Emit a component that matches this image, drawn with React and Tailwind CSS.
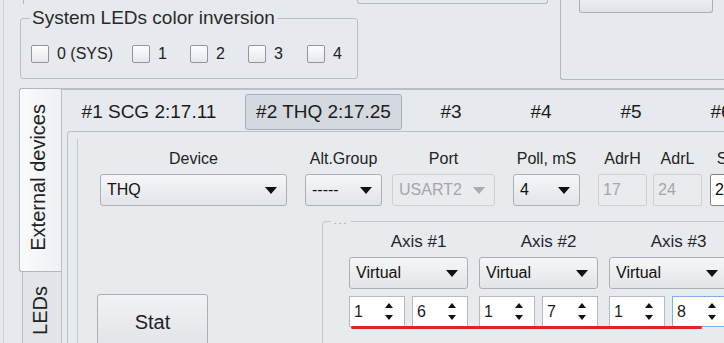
import React from "react";

// small down arrow used by every combo
const Arrow = ({ disabled }) => (
  <svg width="12" height="7" viewBox="0 0 12 7" className="shrink-0">
    <path d="M0 0H12L6 7Z" fill={disabled ? "#a9adb2" : "#111"} />
  </svg>
);

function Combo({ value, className = "", disabled = false }) {
  return (
    <div
      className={`flex items-center h-[32px] pl-[6px] pr-[9px] rounded-[3px] border ${
        disabled
          ? "border-[#cdd1d6] bg-[#e9ebee] text-[#a3a7ac]"
          : "border-[#aab0b7] bg-linear-to-b from-[#f5f6f7] to-[#e2e5e8] text-[#111]"
      } ${className}`}
    >
      <span className="flex-1 text-[16px] leading-none">{value}</span>
      <Arrow disabled={disabled} />
    </div>
  );
}

function Field({ value, disabled = false }) {
  return (
    <div
      className={`mt-[5px] w-full h-[32px] flex items-center pl-[4px] text-[16px] rounded-[2px] border ${
        disabled
          ? "border-[#cdd1d6] bg-[#e9ebee] text-[#a3a7ac]"
          : "border-[#7d838a] bg-white text-[#111]"
      }`}
    >
      {value}
    </div>
  );
}

function Spin({ value, focused = false }) {
  return (
    <div
      className={`w-[56px] h-[31px] bg-white border flex items-center pl-[4px] pr-[11px] ${
        focused ? "border-[#7db2e8]" : "border-[#b5bac0]"
      }`}
    >
      <span className="flex-1 text-[16px] leading-none">{value}</span>
      <div className="flex flex-col gap-[7px]">
        <svg width="8" height="5" viewBox="0 0 8 5">
          <path d="M4 0L8 5H0Z" fill="#111" />
        </svg>
        <svg width="8" height="5" viewBox="0 0 8 5">
          <path d="M0 0H8L4 5Z" fill="#111" />
        </svg>
      </div>
    </div>
  );
}

function Check({ label, className = "" }) {
  return (
    <div className={`flex items-center gap-[8px] ${className}`}>
      <div className="w-[18px] h-[18px] rounded-[2px] border border-[#8f959c] bg-linear-to-b from-[#fdfdfd] to-[#e6e8eb]" />
      <span className="text-[16px] leading-none text-[#222]">{label}</span>
    </div>
  );
}

function Column({ label, className, children }) {
  return (
    <div className={`flex flex-col items-center shrink-0 ${className}`}>
      <div className="h-[20px] leading-[20px] text-[16px] text-[#222] whitespace-nowrap">{label}</div>
      {children}
    </div>
  );
}

function Axis({ label, a, b, focusB }) {
  return (
    <div className="w-[119px] shrink-0 flex flex-col">
      <div className="h-[20px] leading-[20px] text-[17px] text-[#1e2633] text-center pl-[20px] whitespace-nowrap">
        {label}
      </div>
      <Combo value="Virtual" className="mt-[5px] h-[31px]" />
      <div className="mt-[7px] flex gap-[7px]">
        <Spin value={a} />
        <Spin value={b} focused={focusB} />
      </div>
    </div>
  );
}

const tabs = ["#3", "#4", "#5", "#6"];

export default function App() {
  return (
    <div className="w-[724px] h-[343px] overflow-hidden bg-[#e6e9ed] flex font-['Liberation_Sans',Arial,sans-serif] text-[#1b1b1b]">
      <div className="w-[4px] shrink-0 border-r border-[#cdd2d7]" />
      <div className="flex-1 min-w-0 flex flex-col">
        {/* top strip */}
        <div className="h-[88px] shrink-0 flex">
          <div className="w-[556px] shrink-0 flex flex-col">
            <div className="h-[4px] flex">
              <div className="w-[20px] border-r border-[#b4bac1]" />
              <div className="ml-[333px] w-[191px] border-x border-b border-[#b4bac1] rounded-b-[3px]" />
            </div>
            <fieldset className="mt-[4px] ml-[16px] w-[338px] h-[71px] border border-[#b9bfc6] rounded-[3px] pl-[9px]">
              <legend className="px-[2px] text-[19px] leading-[20px] text-[#2a2a2a]">
                System LEDs color inversion
              </legend>
              <div className="mt-[17px] ml-[1px] flex">
                <Check label="0 (SYS)" className="w-[101px]" />
                <Check label="1" className="w-[58px]" />
                <Check label="2" className="w-[58px]" />
                <Check label="3" className="w-[59px]" />
                <Check label="4" />
              </div>
            </fieldset>
          </div>
          <div className="flex-1 h-[80px] border-l border-b border-[#b4bac1] rounded-bl-[3px]">
            <div className="ml-[18px] w-[134px] h-[13px] border-x border-b border-[#aab0b7] rounded-b-[3px] bg-linear-to-b from-[#eceef1] to-[#dfe2e6]" />
          </div>
        </div>

        {/* tab widget */}
        <div className="flex-1 min-h-0 flex">
          <div className="w-[15px] shrink-0" />
          <div className="w-[42px] shrink-0 flex flex-col">
            <div className="h-[184px] shrink-0 border border-r-0 border-[#b1b7be] rounded-l-[3px] bg-linear-to-r from-[#fafbfc] to-[#eef0f3] flex items-center justify-center pr-[6px] pb-[6px]">
              <span className="[writing-mode:vertical-rl] rotate-180 text-[20px] leading-none text-[#222] whitespace-nowrap">
                External devices
              </span>
            </div>
            <div className="ml-[3px] flex-1 border-l border-[#b9bfc6] bg-[#e2e5e9] flex justify-center items-start pt-[14px] pr-[4px]">
              <span className="[writing-mode:vertical-rl] rotate-180 text-[20px] leading-none text-[#222]">LEDs</span>
            </div>
          </div>

          <div className="flex-1 min-w-0 flex flex-col border-l border-t-2 border-[#b9bfc6]">
            <div className="h-[41px] shrink-0 flex items-start pt-[4px] text-[19px] whitespace-nowrap">
              <div className="ml-[8px] w-[158px] h-[36px] shrink-0 flex items-center justify-center">#1 SCG 2:17.11</div>
              <div className="ml-[17px] w-[157px] h-[36px] shrink-0 flex items-center justify-center rounded-[3px] border border-[#a8afb7] bg-[#d4d9df]">
                #2 THQ 2:17.25
              </div>
              {tabs.map((t) => (
                <div key={t} className="ml-[8px] w-[82px] h-[36px] shrink-0 flex items-center justify-center">
                  {t}
                </div>
              ))}
            </div>

            <div className="flex-1 min-h-0 ml-[5px] border-l border-t border-[#b9bfc6] rounded-tl-[4px] bg-[#e8ebee] flex flex-col">
              <div className="ml-[9px] mt-[7px] flex-1 border-l border-[#c3c8ce] flex flex-col">
                <div className="mt-[10px] flex">
                  <Column label="Device" className="ml-[22px] w-[187px]">
                    <Combo value="THQ" className="mt-[5px] w-full" />
                  </Column>
                  <Column label="Alt.Group" className="ml-[18px] w-[77px]">
                    <Combo value="-----" className="mt-[5px] w-full" />
                  </Column>
                  <Column label="Port" className="ml-[10px] w-[103px]">
                    <Combo value="USART2" disabled className="mt-[5px] w-full pl-[5px]" />
                  </Column>
                  <Column label="Poll, mS" className="ml-[18px] w-[67px]">
                    <Combo value="4" className="mt-[5px] w-full" />
                  </Column>
                  <Column label="AdrH" className="ml-[18px] w-[49px]">
                    <Field value="17" disabled />
                  </Column>
                  <Column label="AdrL" className="ml-[6px] w-[49px]">
                    <Field value="24" disabled />
                  </Column>
                  <Column label="Sens" className="ml-[8px] w-[50px]">
                    <Field value="2" />
                  </Column>
                </div>

                <div className="flex items-start">
                  <button className="ml-[19px] mt-[88px] w-[111px] h-[60px] shrink-0 rounded-[3px] border border-[#aab0b7] bg-linear-to-b from-[#f0f2f4] to-[#e0e3e7] text-[20px] leading-[22px] text-[#222] flex justify-center pt-[16px]">
                    Stat
                  </button>
                  <fieldset className="ml-[114px] mt-[10px] w-[420px] h-[140px] shrink-0 border border-[#bfc5cb] rounded-[4px]">
                    <legend className="ml-[8px] px-[3px] text-[10px] leading-[10px] tracking-[2px] text-[#8a9097]">
                      ...
                    </legend>
                    <div className="relative ml-[26px] mt-[6px] flex gap-[11px] w-max">
                      <Axis label="Axis #1" a="1" b="6" />
                      <Axis label="Axis #2" a="1" b="7" />
                      <Axis label="Axis #3" a="1" b="8" focusB />
                      <div className="absolute left-[2px] bottom-[-2px] w-[351px] h-[3px] rounded-full bg-[#e2231f]" />
                    </div>
                  </fieldset>
                </div>
              </div>
            </div>
          </div>
        </div>
      </div>
    </div>
  );
}
